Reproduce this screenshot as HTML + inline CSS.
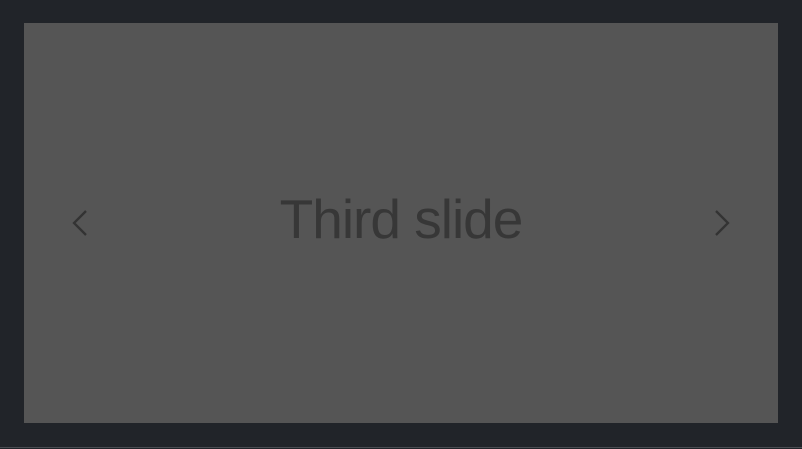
<!DOCTYPE html>
<html><head><style>
html,body{margin:0;padding:0;width:802px;height:449px;background:#212429;overflow:hidden;position:relative}
.box{position:absolute;left:24px;top:23px;width:754px;height:400px;background:#555555}
.t{position:absolute;left:0;width:802px;text-align:center;top:192px;font:55px/1 "Liberation Sans",sans-serif;color:#373737;letter-spacing:-1px}
.line{position:absolute;left:0;top:447px;width:802px;height:1px;background:#4a4d52}
svg{position:absolute}
</style></head><body>
<div class="box"></div>
<div class="t">Third slide</div>
<svg style="left:70px;top:208px" width="20" height="30"><path d="M16 3 L4 15 L16 27" fill="none" stroke="#333" stroke-width="2.3"/></svg>
<svg style="left:712px;top:208px" width="20" height="30"><path d="M4 3 L16 15 L4 27" fill="none" stroke="#333" stroke-width="2.3"/></svg>
<div class="line"></div>
</body></html>
